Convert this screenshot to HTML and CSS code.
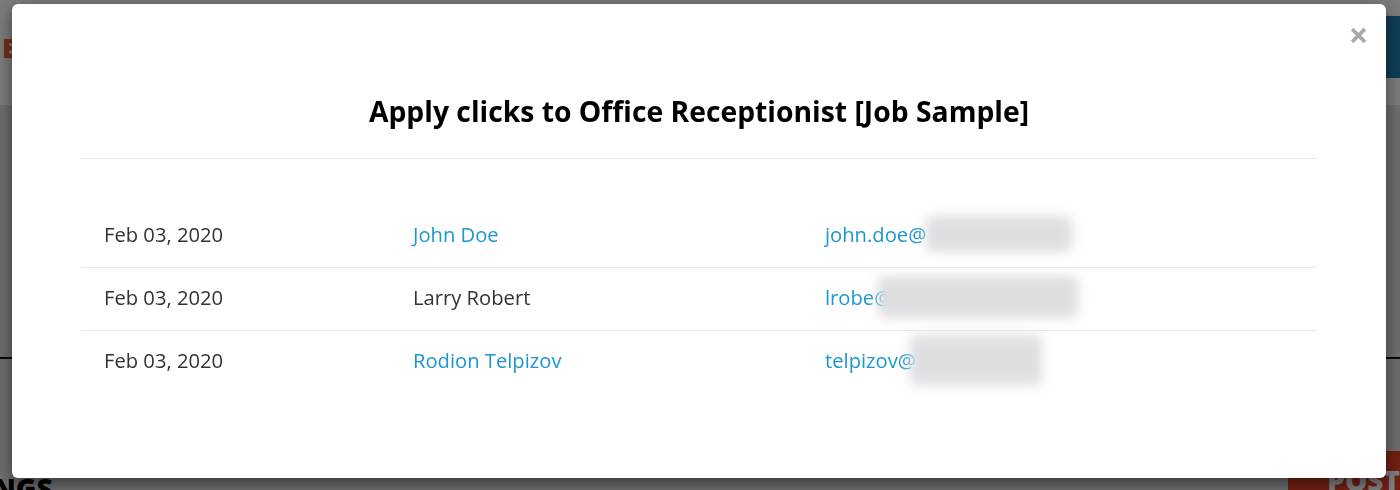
FILE: index.html
```html
<!DOCTYPE html>
<html lang="en">
<head>
    <meta charset="UTF-8">
    <meta name="viewport" content="width=device-width, initial-scale=1.0">
    <title>Apply clicks</title>
    <link rel="stylesheet" href="styles.css">
</head>
<body>
    <!-- pagina por baixo do modal -->
    <div class="page">
        <header class="site-header">
            <span class="logo">E</span>
            <a class="header-button" href="#">M</a>
        </header>
        <div class="page-body">
            <div class="divider"></div>
            <div class="listings-bar">
                <h2 class="listings-title">LISTINGS</h2>
                <a class="post-button" href="#">POST</a>
            </div>
        </div>
    </div>

    <div class="overlay">
        <div class="modal">
            <button class="modal-close" type="button" aria-label="Close">
                <svg width="17" height="17" viewBox="0 0 16 16">
                    <path d="M2 2 L14 14 M14 2 L2 14" stroke="#a9a9a9" stroke-width="3.4" stroke-linecap="butt"/>
                </svg>
            </button>
            <h1 class="modal-title">Apply clicks to Office Receptionist [Job Sample]</h1>
            <div class="clicks-table" id="clicks-table"></div>
        </div>
    </div>

    <script>
        // Dados das candidaturas
        const clicks = [
            { date: "Feb 03, 2020", name: "John Doe", link: true, user: "john.doe@", blur: 146, shift: 0, h: 36 },
            { date: "Feb 03, 2020", name: "Larry Robert", link: false, user: "lrobe@", blur: 200, shift: -14, h: 42 },
            { date: "Feb 03, 2020", name: "Rodion Telpizov", link: true, user: "telpizov@", blur: 132, shift: -6, h: 50 }
        ];

        function displayClicks() {
            const container = document.getElementById('clicks-table');
            clicks.forEach(click => {
                const row = document.createElement('div');
                row.className = 'clicks-row';
                row.innerHTML = `
                    <span class="cell">${click.date}</span>
                    <span class="cell">${click.link ? `<a class="blue" href="#">${click.name}</a>` : click.name}</span>
                    <span class="cell"><a class="blue" href="#">${click.user}</a><span class="blurred" style="width:${click.blur}px;height:${click.h}px;margin-left:${click.shift}px"></span></span>
                `;
                container.appendChild(row);
            });
        }

        document.addEventListener('DOMContentLoaded', displayClicks);
    </script>
</body>
</html>
```

FILE: styles.css
```css
body {
    margin: 0;
    font-family: 'Open Sans', 'Noto Sans', sans-serif;
    background-color: #dadada;
    height: 490px;
    overflow: hidden;
}

/* pagina de fundo */
.site-header {
    height: 105px;
    background-color: #f7f7f7;
    display: flex;
    justify-content: space-between;
    align-items: flex-start;
}

.logo {
    margin-top: 30px;
    padding-left: 2px;
    font-size: 26px;
    font-weight: 800;
    color: #e0602a;
}

.header-button {
    margin-top: 16px;
    width: 110px;
    height: 62px;
    background-color: #1e7bab;
    color: #fff;
    text-decoration: none;
    font-size: 22px;
    padding: 14px 12px;
    box-sizing: border-box;
}

.page-body {
    padding-top: 252px;
}

.divider {
    height: 2px;
    background-color: #111;
}

.listings-bar {
    display: flex;
    justify-content: space-between;
    align-items: flex-start;
    margin-top: 92px;
}

.listings-title {
    margin: 18px 0 0 -76px;
    font-size: 28px;
    font-weight: 800;
    color: #000;
}

.post-button {
    width: 112px;
    height: 60px;
    background-color: #e33e26;
    color: #fff;
    font-size: 28px;
    font-weight: 800;
    text-decoration: none;
    text-align: right;
    padding-top: 10px;
    box-sizing: border-box;
}

/* modal */
.overlay {
    position: fixed;
    inset: 0;
    background-color: rgba(0, 0, 0, 0.5);
    display: flex;
    align-items: flex-start;
    padding: 4px 14px 0 12px;
}

.modal {
    position: relative;
    flex: 1;
    background-color: #fff;
    border-radius: 6px;
    padding: 89px 69px 85px;
    box-shadow: 0 5px 15px rgba(0, 0, 0, 0.5);
}

.modal-close {
    position: absolute;
    top: 23px;
    right: 19px;
    padding: 0;
    border: 0;
    background: none;
    cursor: pointer;
    line-height: 0;
}

.modal-title {
    margin: 0;
    font-size: 28.3px;
    line-height: 36px;
    font-weight: 700;
    color: #000;
    text-align: center;
    padding-bottom: 29px;
    border-bottom: 1px solid #e5e5e5;
}

.clicks-table {
    margin-top: 46px;
}

.clicks-row {
    display: grid;
    grid-template-columns: 309px 412px 1fr;
    height: 62px;
    align-items: center;
    border-bottom: 1px solid #e8e8e8;
    font-size: 20.2px;
    color: #333;
}

.clicks-row:last-child {
    border-bottom: 0;
}

.cell {
    padding-left: 23px;
    padding-bottom: 4px;
    display: flex;
    align-items: center;
}

.blue {
    color: #1b97cf;
    text-decoration: none;
}

.blurred {
    display: inline-block;
    background-color: #dedee2;
    border-radius: 6px;
    filter: blur(6px);
}
```
